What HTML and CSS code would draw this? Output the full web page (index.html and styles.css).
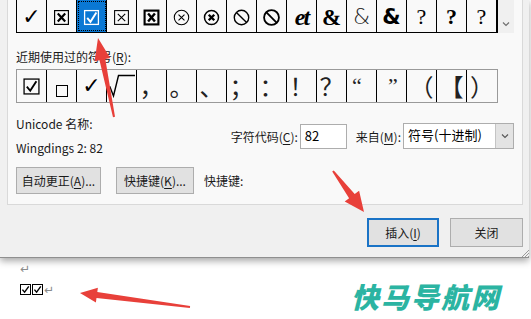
FILE: index.html
```html
<!DOCTYPE html>
<html lang="zh-CN">
<head>
    <meta charset="UTF-8">
    <meta name="viewport" content="width=device-width, initial-scale=1.0">
    <title>符号</title>
    <link rel="stylesheet" href="styles.css">
</head>
<body>
    <div class="dialog">
        <div class="panel">
            <!-- 符号表 (最后一行) -->
            <div class="grid-row">
                <div class="grid top-grid">
                    <span class="cell check">✓</span>
                    <span class="cell"><svg viewBox="0 0 16 16"><rect x="1.5" y="1.5" width="13" height="13" fill="none" stroke="#000" stroke-width="1.1"/><path d="M4.5 4.2 L11.5 11.8 M11.5 4.2 L4.5 11.8" stroke="#000" stroke-width="2"/></svg></span>
                    <span class="cell selected"><svg viewBox="0 0 16 16"><rect x="1.5" y="1.5" width="13" height="13" fill="none" stroke="#fff" stroke-width="1.2"/><path d="M4 8.3 L7 12 L12.6 3.2" fill="none" stroke="#fff" stroke-width="1.8"/></svg></span>
                    <span class="cell"><svg viewBox="0 0 16 16"><rect x="1.5" y="1.5" width="13" height="13" fill="none" stroke="#000" stroke-width="1"/><path d="M4.5 4.5 L11.5 11.5 M11.5 4.5 L4.5 11.5" stroke="#000" stroke-width="1"/></svg></span>
                    <span class="cell"><svg viewBox="0 0 16 16"><rect x="1.5" y="1.5" width="13" height="13" fill="none" stroke="#000" stroke-width="2"/><path d="M4.8 4.3 L11.2 11.7 M11.2 4.3 L4.8 11.7" stroke="#000" stroke-width="2.3"/></svg></span>
                    <span class="cell"><svg viewBox="0 0 16 16"><circle cx="8" cy="8" r="6.8" fill="none" stroke="#000" stroke-width="1"/><path d="M5.2 5.2 L10.8 10.8 M10.8 5.2 L5.2 10.8" stroke="#000" stroke-width="1"/></svg></span>
                    <span class="cell"><svg viewBox="0 0 16 16"><circle cx="8" cy="8" r="6.6" fill="none" stroke="#000" stroke-width="1.4"/><path d="M5.4 5.4 L10.6 10.6 M10.6 5.4 L5.4 10.6" stroke="#000" stroke-width="2.2"/></svg></span>
                    <span class="cell"><svg viewBox="0 0 16 16"><circle cx="8" cy="8" r="6.8" fill="none" stroke="#000" stroke-width="1.3"/><path d="M3.2 3.2 L12.8 12.8" stroke="#000" stroke-width="1.3"/></svg></span>
                    <span class="cell"><svg viewBox="0 0 16 16"><circle cx="8" cy="8" r="7" fill="none" stroke="#000" stroke-width="1.7"/><path d="M3 3 L13 13" stroke="#000" stroke-width="1.7"/></svg></span>
                    <span class="cell et">et</span>
                    <span class="cell amp">&amp;</span>
                    <span class="cell amp-thin">&amp;</span>
                    <span class="cell amp-bold">&amp;</span>
                    <span class="cell quest">?</span>
                    <span class="cell quest bold">?</span>
                    <span class="cell quest">?</span>
                </div>
                <div class="scroll">
                    <svg viewBox="0 0 12 12"><path d="M3 4.5 L6 7.5 L9 4.5" fill="none" stroke="#707070" stroke-width="1.2"/></svg>
                </div>
            </div>

            <div class="label">近期使用过的符号(<u>R</u>):</div>

            <!-- 近期使用过的符号 -->
            <div class="grid recent-grid">
                <span class="cell"><svg class="big-box" viewBox="0 0 16 16"><rect x="1" y="1" width="14" height="14" fill="none" stroke="#000" stroke-width="1.2"/><path d="M3.6 8.2 L6.8 12 L12.6 3" fill="none" stroke="#000" stroke-width="1.8"/></svg></span>
                <span class="cell"><svg class="small-box" viewBox="0 0 12 12"><rect x="0.5" y="0.5" width="11" height="11" fill="none" stroke="#000" stroke-width="1"/></svg></span>
                <span class="cell check-bold">✓</span>
                <span class="cell"><svg class="radical" viewBox="0 0 30 30"><path d="M2 18 L5 16 L8.5 25 L13.5 4.5 L30 4.5" fill="none" stroke="#000" stroke-width="1.4"/></svg></span>
                <span class="cell">，</span>
                <span class="cell">。</span>
                <span class="cell">、</span>
                <span class="cell">；</span>
                <span class="cell">：</span>
                <span class="cell">！</span>
                <span class="cell">？</span>
                <span class="cell quote-open">“</span>
                <span class="cell quote-close">”</span>
                <span class="cell">（</span>
                <span class="cell">【</span>
                <span class="cell">）</span>
            </div>

            <div class="info">
                <div class="names">
                    <div>Unicode 名称:</div>
                    <div class="font-name">Wingdings 2: 82</div>
                </div>
                <div class="code">
                    <span class="code-label">字符代码(<u>C</u>):</span>
                    <div class="field">82</div>
                    <span class="code-label">来自(<u>M</u>):</span>
                    <div class="select">
                        <span class="select-text">符号(十进制)</span>
                        <span class="drop"><svg viewBox="0 0 12 12"><path d="M3 4.5 L6 7.5 L9 4.5" fill="none" stroke="#555" stroke-width="1.1"/></svg></span>
                    </div>
                </div>
            </div>

            <div class="actions">
                <button class="btn autocorrect">自动更正(<u>A</u>)...</button>
                <button class="btn shortcut">快捷键(<u>K</u>)...</button>
                <span class="shortcut-label">快捷键:</span>
            </div>
        </div>

        <div class="footer">
            <button class="btn primary">插入(<u>I</u>)</button>
            <button class="btn close">关闭</button>
            <svg class="grip" viewBox="0 0 8 8"><path d="M8 1 L1 8 M8 4 L4 8 M8 7 L7 8" stroke="#9a9a9a" stroke-width="1"/></svg>
        </div>
    </div>

    <!-- 文档区域 -->
    <div class="doc">
        <div class="doc-line"><span class="para">↵</span></div>
        <div class="doc-line">
            <svg class="doc-box" viewBox="0 0 11 11"><rect x="0.5" y="0.5" width="10" height="10" fill="none" stroke="#000" stroke-width="1"/><path d="M2.4 5.6 L4.6 8.2 L8.8 2.4" fill="none" stroke="#000" stroke-width="1.4"/></svg><svg class="doc-box" viewBox="0 0 11 11"><rect x="0.5" y="0.5" width="10" height="10" fill="none" stroke="#000" stroke-width="1"/><path d="M2.4 5.6 L4.6 8.2 L8.8 2.4" fill="none" stroke="#000" stroke-width="1.4"/></svg><span class="para">↵</span>
        </div>
    </div>

    <div class="brand">快马导航网</div>

    <!-- 红色箭头标注 -->
    <svg class="arrows" viewBox="0 0 531 319">
        <polygon points="98,38 110.2,58 105.3,59 115,116.8 113,117.2 99.5,60.2 94.6,61.2"/>
        <polygon points="364,212 344.7,201.5 349.1,198.2 332.2,171.6 333.8,170.4 354.7,194 359.1,190.7"/>
        <polygon points="80,293 97.9,287.7 97.3,292.1 190.1,306 189.9,308 96.5,298.1 95.9,302.5"/>
    </svg>
</body>
</html>
```

FILE: styles.css
```css
body {
    margin: 0;
    width: 531px;
    height: 319px;
    overflow: hidden;
    position: relative;
    background-color: #fff;
    font-family: "Noto Sans CJK SC", "Liberation Sans", sans-serif;
    font-size: 12px;
    color: #000;
}
u {
    text-decoration: underline;
    text-underline-offset: 2px;
}
.dialog {
    position: relative;
    width: 529px;
    background-color: #f0f0f0;
    border-bottom: 1px solid #8f8f8f;
    box-shadow: 0 3px 7px rgba(0, 0, 0, 0.35);
}
.panel {
    margin-left: 7px;
    width: 516px;
    box-sizing: border-box;
    padding: 0 8px 10px;
    background-color: #f9f9f9;
    border: 1px solid #d9d9d9;
    border-top: none;
}
.grid-row {
    display: flex;
    margin-top: -1px;
}
.grid {
    display: flex;
    height: 34px;
    box-sizing: border-box;
}
.top-grid {
    border: 1px solid #000;
}
.recent-grid {
    width: 482px;
    border: 1px solid #9a9a9a;
    margin-top: 4px;
}
.cell {
    width: 30px;
    flex: none;
    box-sizing: border-box;
    border-right: 1px solid #000;
    display: flex;
    align-items: center;
    justify-content: center;
    line-height: 1;
}
.recent-grid .cell {
    font-size: 24px;
    color: #222;
}
.recent-grid .cell:last-child {
    border-right: none;
}
.cell svg {
    width: 17px;
    height: 17px;
}
.top-grid .cell {
    padding-top: 2px;
}
.cell.selected {
    background-color: #0a78d4;
    outline: 1px dotted #000;
    outline-offset: -2px;
}
.cell.check {
    font-family: "DejaVu Sans", sans-serif;
    font-size: 22px;
}
.cell.check-bold {
    font-family: "DejaVu Sans", sans-serif;
    font-size: 22px;
    font-weight: bold;
    color: #000;
}
.cell.quote-open,
.cell.quote-close {
    font-family: "Liberation Serif", serif;
    font-size: 22px;
    align-items: flex-start;
    justify-content: flex-start;
    padding-top: 5px;
}
.cell.quote-open {
    padding-left: 5px;
}
.cell.quote-close {
    padding-left: 11px;
}
.cell.et {
    font-family: "Liberation Serif", serif;
    font-style: italic;
    font-weight: bold;
    font-size: 24px;
    letter-spacing: -2px;
}
.cell.amp {
    font-family: "Liberation Serif", serif;
    font-weight: bold;
    font-size: 23px;
}
.cell.amp-thin {
    font-family: "DejaVu Sans", sans-serif;
    font-weight: 300;
    font-size: 22px;
    color: #222;
}
.cell.amp-bold {
    font-family: "DejaVu Sans", sans-serif;
    font-weight: bold;
    font-size: 21px;
}
.cell.quest {
    font-family: "Liberation Serif", serif;
    font-size: 22px;
}
.cell.quest.bold {
    font-weight: bold;
}
.scroll {
    width: 16px;
    height: 34px;
    background-color: #f0f0f0;
    display: flex;
    align-items: flex-end;
    justify-content: center;
}
.scroll svg {
    width: 12px;
    height: 12px;
    margin-bottom: 3px;
}
.big-box {
    width: 17px !important;
    height: 17px !important;
}
.small-box {
    width: 12px !important;
    height: 12px !important;
    margin-top: 10px;
}
.radical {
    width: 30px !important;
    height: 30px !important;
    margin-left: -4px;
}
.label {
    margin-top: 16px;
    line-height: 16px;
    color: #1a1a1a;
}
.info {
    margin-top: 11px;
    display: flex;
    align-items: center;
    justify-content: space-between;
}
.names div {
    line-height: 20px;
    color: #1a1a1a;
}
.names .font-name {
    margin-top: 4px;
}
.code {
    display: flex;
    align-items: center;
}
.code-label {
    margin-right: 2px;
    color: #1a1a1a;
}
.field {
    width: 47px;
    height: 25px;
    box-sizing: border-box;
    margin-right: 9px;
    padding-left: 4px;
    background-color: #fff;
    border: 1px solid #adadad;
    line-height: 21px;
    font-size: 13px;
}
.select {
    width: 111px;
    height: 26px;
    box-sizing: border-box;
    display: flex;
    background-color: #fff;
    border: 1px solid #adadad;
}
.select-text {
    flex: 1;
    padding-left: 4px;
    line-height: 22px;
    font-size: 13px;
}
.drop {
    width: 17px;
    background-color: #e3e3e3;
    border-left: 1px solid #c4c4c4;
    display: flex;
    align-items: center;
    justify-content: center;
}
.drop svg {
    width: 12px;
    height: 12px;
}
.actions {
    margin-top: 9px;
    display: flex;
    align-items: center;
}
.btn {
    height: 27px;
    padding: 0;
    background-color: #e1e1e1;
    border: 1px solid #adadad;
    font-family: "Noto Sans CJK SC", "Liberation Sans", sans-serif;
    font-size: 12px;
    color: #1a1a1a;
}
.autocorrect {
    width: 85px;
}
.shortcut {
    width: 78px;
    margin-left: 15px;
}
.shortcut-label {
    margin-left: 10px;
    color: #1a1a1a;
}
.footer {
    height: 52px;
    box-sizing: border-box;
    padding: 13px 6px 0 0;
    display: flex;
    justify-content: flex-end;
    gap: 11px;
}
.footer .btn {
    height: 29px;
}
.primary {
    width: 72px;
    border: 2px solid #1a73c6;
}
.close {
    width: 73px;
}
.grip {
    position: absolute;
    right: 0;
    bottom: 0;
    width: 8px;
    height: 8px;
}
.doc {
    padding-left: 20px;
}
.doc-line {
    height: 21px;
    display: flex;
    align-items: center;
}
.para {
    font-family: "DejaVu Sans", sans-serif;
    font-size: 12px;
    color: #8a8a8a;
}
.doc-box {
    width: 11px;
    height: 11px;
    margin-right: 1px;
}
.brand {
    position: absolute;
    left: 351px;
    top: 280px;
    font-size: 28px;
    line-height: 32px;
    font-weight: 900;
    font-style: italic;
    letter-spacing: 2px;
    color: #2bb4a2;
}
.arrows {
    position: absolute;
    left: 0;
    top: 0;
    width: 531px;
    height: 319px;
    pointer-events: none;
}
.arrows polygon {
    fill: #e8403a;
}
```
